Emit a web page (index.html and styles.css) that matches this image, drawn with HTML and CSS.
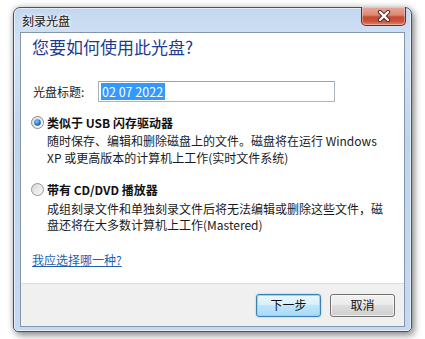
FILE: index.html
```html
<!DOCTYPE html>
<html lang="zh-CN">
<head>
<meta charset="utf-8">
<title>刻录光盘</title>
<link rel="stylesheet" href="styles.css">
</head>
<body>
<div class="window">
  <div class="titlebar">
    <span class="title">刻录光盘</span>
    <div class="close">
      <svg width="16" height="12" viewBox="0 0 16 12">
        <path d="M4 2 L12 10 M12 2 L4 10" stroke="#4a2a22" stroke-width="4.2" stroke-linecap="round" fill="none"/>
        <path d="M4 2 L12 10 M12 2 L4 10" stroke="#ffffff" stroke-width="2.4" stroke-linecap="round" fill="none"/>
      </svg>
    </div>
  </div>
  <div class="client">
    <div class="main">
      <h1 class="instruction">您要如何使用此光盘?</h1>
      <div class="field">
        <span class="field-label">光盘标题:</span>
        <div class="textbox"><span class="selected">02 07 2022</span></div>
      </div>
      <div class="option first">
        <div class="opt-head">
          <svg class="radio" width="13" height="13" viewBox="0 0 13 13">
            <defs>
              <linearGradient id="rg1" x1="0" y1="0" x2="1" y2="1">
                <stop offset="0" stop-color="#dcdcdc"/>
                <stop offset="1" stop-color="#fafafa"/>
              </linearGradient>
              <radialGradient id="dot" cx="0.4" cy="0.35" r="0.7">
                <stop offset="0" stop-color="#8fd0fa"/>
                <stop offset="0.6" stop-color="#2a7ad6"/>
                <stop offset="1" stop-color="#1a4f9e"/>
              </radialGradient>
            </defs>
            <circle cx="6.5" cy="6.5" r="6" fill="url(#rg1)" stroke="#8a8a8a" stroke-width="1"/>
            <circle cx="6.5" cy="6.5" r="3.3" fill="url(#dot)"/>
          </svg>
          <span class="opt-label">类似于 USB 闪存驱动器</span>
        </div>
        <p class="opt-desc">随时保存、编辑和删除磁盘上的文件。磁盘将在运行 Windows<br>XP 或更高版本的计算机上工作(实时文件系统)</p>
      </div>
      <div class="option second">
        <div class="opt-head">
          <svg class="radio" width="13" height="13" viewBox="0 0 13 13">
            <defs>
              <linearGradient id="rg2" x1="0" y1="0" x2="1" y2="1">
                <stop offset="0" stop-color="#d6d6d6"/>
                <stop offset="1" stop-color="#fbfbfb"/>
              </linearGradient>
            </defs>
            <circle cx="6.5" cy="6.5" r="6" fill="url(#rg2)" stroke="#949494" stroke-width="1"/>
          </svg>
          <span class="opt-label">带有 CD/DVD 播放器</span>
        </div>
        <p class="opt-desc">成组刻录文件和单独刻录文件后将无法编辑或删除这些文件，磁<br>盘还将在大多数计算机上工作(Mastered)</p>
      </div>
      <a class="help" href="#">我应选择哪一种?</a>
    </div>
    <div class="footer">
      <button class="btn default">下一步</button>
      <button class="btn">取消</button>
    </div>
  </div>
</div>
</body>
</html>
```

FILE: styles.css
```css
html, body {
  margin: 0;
  padding: 0;
  background: #ffffff;
}

body {
  width: 425px;
  height: 339px;
  overflow: hidden;
  font-family: "Noto Sans CJK SC", "Noto Sans", sans-serif;
  font-size: 12px;
  color: #1a1a1a;
}

.window {
  box-sizing: border-box;
  width: 399px;
  height: 325px;
  margin: 7px 0 0 13px;
  border: 1px solid #46546a;
  border-radius: 7px 7px 5px 5px;
  background: linear-gradient(to bottom, #c2d7ef 0%, #d3e3f5 12%, #bfd5ee 40%, #c5daf1 100%);
  box-shadow: 0 0 6px rgba(0, 0, 0, 0.25), 3px 4px 7px rgba(0, 0, 0, 0.35), inset 0 0 0 1px rgba(255, 255, 255, 0.55);
  display: flex;
  flex-direction: column;
  padding: 0 6px 4px 6px;
}

.titlebar {
  height: 24px;
  display: flex;
  align-items: flex-start;
  justify-content: space-between;
}

.title {
  margin: 4px 0 0 2px;
  line-height: 17px;
  font-size: 12px;
  color: #111;
  text-shadow: 0 0 6px #ffffff, 0 0 3px #ffffff;
}

.close {
  box-sizing: border-box;
  width: 45px;
  height: 19px;
  margin: -1px -1px 0 0;
  border: 1px solid #6b2b22;
  border-top: none;
  border-radius: 0 0 5px 5px;
  background: linear-gradient(to bottom, #e9a99b 0%, #dd8673 45%, #c64a33 55%, #c9553c 80%, #e2876a 100%);
  box-shadow: inset 0 0 0 1px rgba(255, 220, 210, 0.45);
  display: flex;
  align-items: center;
  justify-content: center;
}

.client {
  flex: 1;
  display: flex;
  flex-direction: column;
  border: 1px solid #8496ae;
  background: #ffffff;
}

.main {
  flex: 1;
  background: #ffffff;
  padding: 2px 0 0 11px;
  display: flex;
  flex-direction: column;
  align-items: flex-start;
}

.instruction {
  margin: 0;
  font-size: 17px;
  line-height: 24px;
  font-weight: normal;
  color: #1d3b93;
}

.field {
  margin-top: 22px;
  display: flex;
  align-items: center;
}

.field-label {
  width: 65px;
  padding-left: 1px;
  line-height: 17px;
}

.textbox {
  box-sizing: border-box;
  width: 237px;
  height: 21px;
  border: 1px solid #abb5c2;
  border-top-color: #9ba6b4;
  background: #fff;
  padding: 1px 0 0 2px;
  display: flex;
  align-items: flex-start;
}

.selected {
  background: #3399ff;
  color: #ffffff;
  line-height: 17px;
  padding: 0 2px 0 1px;
  font-size: 12.5px;
}

.option {
  display: flex;
  flex-direction: column;
}

.option.first {
  margin-top: 12px;
}

.option.second {
  margin-top: 15px;
}

.opt-head {
  display: flex;
  align-items: center;
  margin-left: -1px;
  height: 17px;
}

.radio {
  display: block;
  margin-right: 3px;
}

.opt-label {
  font-weight: bold;
  line-height: 17px;
  color: #111;
}

.opt-desc {
  margin: 1px 0 0 15px;
  line-height: 17px;
  color: #1a1a1a;
}

.option.second .opt-desc {
  line-height: 16px;
  margin-top: 3px;
}

.help {
  margin-top: 18px;
  line-height: 17px;
  color: #1e5fb0;
  text-decoration: underline;
}

.footer {
  height: 43px;
  box-sizing: border-box;
  border-top: 1px solid #dcdcdc;
  background: #f0f0f0;
  display: flex;
  justify-content: flex-end;
  align-items: center;
  gap: 9px;
  padding: 0 9px 0 0;
}

.btn {
  box-sizing: border-box;
  width: 65px;
  height: 23px;
  border: 1px solid #707070;
  border-radius: 3px;
  background: linear-gradient(to bottom, #f2f2f2 0%, #ebebeb 45%, #dddddd 50%, #cfcfcf 100%);
  box-shadow: inset 0 0 0 1px rgba(255, 255, 255, 0.7);
  font-family: "Noto Sans CJK SC", "Noto Sans", sans-serif;
  font-size: 12px;
  color: #111;
  padding: 0;
  line-height: 20px;
}

.btn.default {
  border-color: #3c7fb1;
  background: linear-gradient(to bottom, #eaf6fd 0%, #d9f0fc 45%, #bee6fd 50%, #a7d9f5 100%);
  box-shadow: inset 0 0 0 1px #7fe0f8, 0 0 2px #7ec3ea;
}
```
